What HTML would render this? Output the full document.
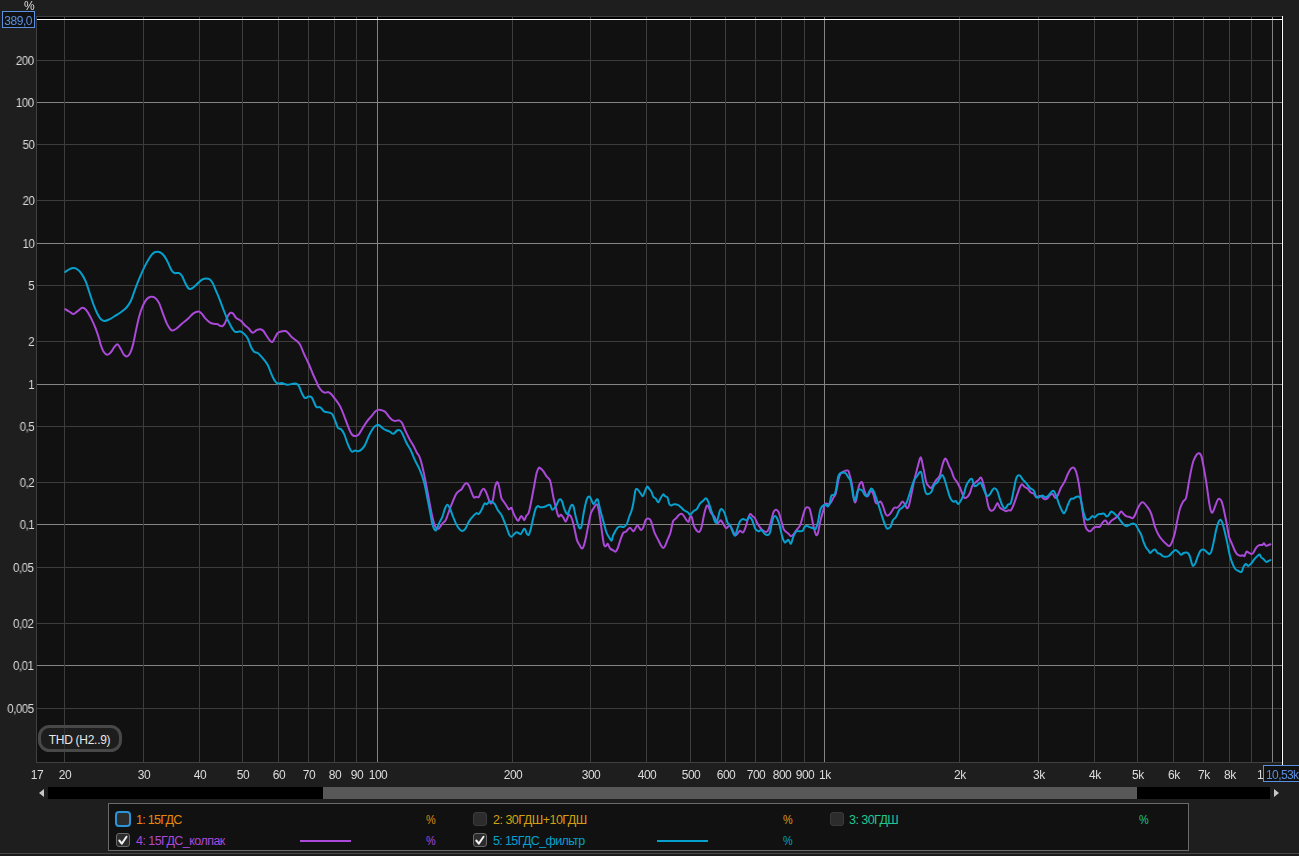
<!DOCTYPE html>
<html lang="ru"><head><meta charset="utf-8"><title>THD</title>
<style>
html,body{margin:0;padding:0;background:#1e1e1e;}
body{width:1299px;height:856px;position:relative;overflow:hidden;font-family:"Liberation Sans",sans-serif;font-size:12px;color:#dcdcdc;}
.plotsvg{position:absolute;left:0;top:0;}
.yl,.xl,.unit,.cur{will-change:transform;}
.yl{transform:scaleX(0.955);transform-origin:right center;position:absolute;right:1265px;height:14px;line-height:14px;white-space:nowrap;letter-spacing:-0.45px;}
.xl{position:absolute;top:768px;width:40px;margin-left:-20px;text-align:center;height:14px;line-height:14px;white-space:nowrap;letter-spacing:-0.45px;}
.unit{position:absolute;left:24px;top:-1px;height:14px;line-height:14px;letter-spacing:-0.3px;}
.cur{position:absolute;box-sizing:border-box;border:1px solid #5b90e0;background:#111;color:#5b90e0;white-space:nowrap;letter-spacing:-0.45px;overflow:hidden;}
.thd{position:absolute;left:38px;top:725px;width:84px;height:27px;box-sizing:border-box;border:3px solid #484848;border-radius:11.5px;background:rgba(40,40,40,0.55);text-align:center;padding-top:1px;line-height:22px;letter-spacing:-0.28px;color:#e8e8e8;text-indent:-1px;}
.sb{position:absolute;left:48px;top:787px;width:1222px;height:12px;background:#000;}
.sb i{position:absolute;left:275px;top:0;width:814px;height:12px;background:#585858;}
.arr{position:absolute;width:0;height:0;border-top:4px solid transparent;border-bottom:4px solid transparent;}
.legend{position:absolute;left:108px;top:803px;width:1081px;height:48px;box-sizing:border-box;border:1px solid #6a6a6a;background:#111;}
.cb{position:absolute;box-sizing:border-box;width:14px;height:14px;border:1px solid #3a3a3a;border-radius:3px;background:#2c2c2c;}
.cb.on{border-color:#6a6a6a;}
.cb.focus{width:16px;height:16px;border:2px solid #2a94d6;border-radius:4px;}
.lt{position:absolute;height:16px;line-height:16px;white-space:nowrap;font-size:12.5px;letter-spacing:-0.55px;}
.pc{transform:scaleX(0.87);transform-origin:0 0;}
.ln{position:absolute;height:2px;width:51px;}
.foot{position:absolute;left:0;top:853px;width:1299px;height:3px;background:#1b1b1b;border-top:1px solid #484848;box-sizing:border-box;}
</style></head><body>

<svg class="plotsvg" width="1299" height="856" viewBox="0 0 1299 856">
<rect x="36" y="16" width="1247" height="747" fill="#111111"/>
<rect x="37" y="17" width="1245" height="2" fill="#000"/>
<rect x="1281" y="20" width="1" height="742" fill="#000"/>
<rect x="37" y="60" width="1245" height="1" fill="#3d3d3d"/>
<rect x="37" y="102" width="1245" height="1" fill="#848484"/>
<rect x="37" y="144" width="1245" height="1" fill="#3d3d3d"/>
<rect x="37" y="200" width="1245" height="1" fill="#3d3d3d"/>
<rect x="37" y="243" width="1245" height="1" fill="#848484"/>
<rect x="37" y="285" width="1245" height="1" fill="#3d3d3d"/>
<rect x="37" y="341" width="1245" height="1" fill="#3d3d3d"/>
<rect x="37" y="384" width="1245" height="1" fill="#848484"/>
<rect x="37" y="426" width="1245" height="1" fill="#3d3d3d"/>
<rect x="37" y="482" width="1245" height="1" fill="#3d3d3d"/>
<rect x="37" y="524" width="1245" height="1" fill="#848484"/>
<rect x="37" y="567" width="1245" height="1" fill="#3d3d3d"/>
<rect x="37" y="623" width="1245" height="1" fill="#3d3d3d"/>
<rect x="37" y="665" width="1245" height="1" fill="#848484"/>
<rect x="37" y="708" width="1245" height="1" fill="#3d3d3d"/>
<rect x="64" y="17" width="1" height="745" fill="#3d3d3d"/>
<rect x="143" y="17" width="1" height="745" fill="#3d3d3d"/>
<rect x="199" y="17" width="1" height="745" fill="#3d3d3d"/>
<rect x="242" y="17" width="1" height="745" fill="#3d3d3d"/>
<rect x="278" y="17" width="1" height="745" fill="#3d3d3d"/>
<rect x="308" y="17" width="1" height="745" fill="#3d3d3d"/>
<rect x="334" y="17" width="1" height="745" fill="#3d3d3d"/>
<rect x="356" y="17" width="1" height="745" fill="#3d3d3d"/>
<rect x="377" y="17" width="1" height="745" fill="#848484"/>
<rect x="512" y="17" width="1" height="745" fill="#3d3d3d"/>
<rect x="590" y="17" width="1" height="745" fill="#3d3d3d"/>
<rect x="646" y="17" width="1" height="745" fill="#3d3d3d"/>
<rect x="690" y="17" width="1" height="745" fill="#3d3d3d"/>
<rect x="725" y="17" width="1" height="745" fill="#3d3d3d"/>
<rect x="755" y="17" width="1" height="745" fill="#3d3d3d"/>
<rect x="781" y="17" width="1" height="745" fill="#3d3d3d"/>
<rect x="804" y="17" width="1" height="745" fill="#3d3d3d"/>
<rect x="824" y="17" width="1" height="745" fill="#848484"/>
<rect x="959" y="17" width="1" height="745" fill="#3d3d3d"/>
<rect x="1038" y="17" width="1" height="745" fill="#3d3d3d"/>
<rect x="1094" y="17" width="1" height="745" fill="#3d3d3d"/>
<rect x="1137" y="17" width="1" height="745" fill="#3d3d3d"/>
<rect x="1173" y="17" width="1" height="745" fill="#3d3d3d"/>
<rect x="1203" y="17" width="1" height="745" fill="#3d3d3d"/>
<rect x="1229" y="17" width="1" height="745" fill="#3d3d3d"/>
<rect x="1251" y="17" width="1" height="745" fill="#3d3d3d"/>
<rect x="1272" y="17" width="1" height="745" fill="#848484"/>
<rect x="36" y="16" width="1" height="747" fill="#404040"/>
<rect x="36" y="16" width="1246" height="1" fill="#404040"/>
<rect x="36" y="762" width="1246" height="1" fill="#404040"/>
<g fill="none" stroke-width="2" stroke-linejoin="round" stroke-linecap="round">
<path stroke="#ab49d8" d="M65.2 309.2C66.0 309.7 68.5 311.2 69.9 312.0C71.3 312.8 72.3 314.0 73.5 313.9C74.7 313.8 75.8 312.4 77.2 311.4C78.7 310.4 80.8 308.0 82.2 307.7C83.7 307.4 84.5 308.0 85.9 309.6C87.3 311.2 89.2 314.4 90.8 317.6C92.4 320.8 94.3 325.0 95.7 328.7C97.1 332.4 98.6 337.2 99.4 339.8C100.2 342.4 99.8 342.2 100.5 344.2C101.2 346.2 102.4 349.9 103.5 351.6C104.6 353.4 106.0 354.6 107.2 354.7C108.4 354.8 109.7 353.5 110.9 352.2C112.1 350.9 113.5 348.0 114.6 346.7C115.7 345.4 116.7 344.0 117.7 344.4C118.7 344.8 119.8 347.4 120.8 349.1C121.8 350.8 122.9 353.5 123.9 354.7C124.9 355.9 125.9 356.7 126.9 356.5C127.9 356.3 129.0 355.4 130.0 353.4C131.0 351.3 132.1 348.2 133.1 344.2C134.1 340.2 135.2 334.1 136.2 329.4C137.2 324.7 138.2 319.9 139.3 315.9C140.4 311.9 141.8 308.2 143.0 305.4C144.2 302.6 145.4 300.6 146.7 299.2C148.0 297.8 149.6 297.0 151.0 296.8C152.4 296.6 154.0 297.0 155.3 298.0C156.6 299.0 157.8 300.4 159.0 302.9C160.2 305.4 161.5 309.5 162.7 312.8C163.9 316.1 165.2 319.9 166.4 322.6C167.6 325.3 169.0 327.5 170.0 328.8C171.0 330.1 171.5 330.6 172.5 330.6C173.5 330.6 174.5 330.0 176.2 328.8C177.8 327.6 180.3 325.1 182.4 323.3C184.5 321.6 186.7 320.0 188.5 318.3C190.3 316.6 191.8 314.5 193.4 313.4C195.1 312.3 197.1 311.6 198.4 311.6C199.8 311.6 200.3 312.2 201.5 313.4C202.7 314.6 204.4 317.4 205.8 318.9C207.2 320.4 208.7 321.8 210.1 322.6C211.5 323.4 213.2 323.6 214.4 323.9C215.6 324.1 216.6 323.8 217.5 324.1C218.4 324.4 219.1 325.4 219.9 325.7C220.7 326.0 221.6 326.5 222.4 326.1C223.2 325.7 224.1 324.8 224.9 323.3C225.7 321.8 226.5 318.8 227.3 317.1C228.1 315.4 229.1 313.9 229.8 313.2C230.5 312.5 231.0 312.7 231.6 312.8C232.2 312.9 232.7 313.1 233.5 314.0C234.3 314.9 234.9 316.8 236.2 317.9C237.5 319.0 239.7 319.7 241.1 320.9C242.5 322.1 243.6 324.0 244.8 325.2C246.0 326.4 247.4 327.2 248.5 328.3C249.6 329.4 250.8 331.3 251.6 332.0C252.4 332.7 252.6 332.9 253.4 332.6C254.2 332.3 255.4 330.8 256.5 330.2C257.6 329.6 259.1 329.1 260.2 329.2C261.3 329.3 262.2 329.6 263.3 330.8C264.4 332.0 265.8 334.7 266.9 336.3C268.0 337.9 269.1 339.7 270.0 340.6C270.9 341.5 271.7 342.4 272.5 341.9C273.3 341.4 274.2 339.0 275.0 337.6C275.8 336.2 276.6 334.3 277.4 333.3C278.2 332.3 278.6 332.2 279.9 331.8C281.2 331.4 284.0 330.8 285.4 331.0C286.8 331.2 287.4 332.2 288.5 333.3C289.6 334.4 290.8 336.3 292.2 337.6C293.6 338.9 295.8 340.1 297.1 341.3C298.4 342.5 299.1 342.8 300.2 344.9C301.3 346.9 302.5 350.4 303.9 353.6C305.3 356.8 307.3 360.5 308.8 364.0C310.3 367.5 311.8 371.4 313.1 374.5C314.4 377.6 315.9 380.6 316.8 382.5C317.7 384.4 317.4 384.8 318.3 386.2C319.2 387.6 320.9 390.0 322.0 391.1C323.1 392.2 324.1 392.5 325.1 392.7C326.1 392.9 327.2 391.9 328.2 392.1C329.2 392.4 330.1 392.9 331.3 394.2C332.5 395.5 334.2 397.8 335.6 399.7C337.0 401.6 338.6 403.4 339.9 405.9C341.2 408.4 342.4 411.4 343.6 414.5C344.8 417.6 346.2 421.4 347.3 424.3C348.4 427.2 349.4 429.9 350.3 431.7C351.2 433.5 351.9 434.7 352.8 435.4C353.7 436.1 354.9 436.2 355.9 436.0C356.9 435.8 357.9 435.5 359.0 434.2C360.1 432.9 361.4 430.1 362.7 428.0C364.0 425.9 365.6 423.2 367.0 421.3C368.4 419.4 370.0 417.9 371.3 416.3C372.6 414.7 373.9 412.9 375.0 411.8C376.1 410.7 377.0 410.2 378.1 409.9C379.2 409.6 380.5 409.8 381.7 410.2C382.9 410.6 384.2 410.9 385.4 412.0C386.6 413.1 388.0 415.6 389.1 416.9C390.2 418.2 391.2 419.3 392.2 420.0C393.2 420.7 394.2 420.9 395.3 421.0C396.4 421.1 397.9 420.0 399.0 420.4C400.1 420.8 401.0 421.2 402.1 423.1C403.2 425.0 404.6 429.0 405.8 431.7C407.0 434.4 408.3 436.8 409.5 439.1C410.7 441.4 412.0 443.0 413.2 445.3C414.4 447.6 415.8 450.7 416.9 452.7C418.0 454.7 418.7 454.8 419.7 457.4C420.7 460.0 421.8 464.2 422.8 468.5C423.8 472.8 424.9 478.2 425.9 483.3C426.9 488.4 427.9 494.0 428.9 499.3C429.9 504.6 431.0 510.8 432.0 515.3C433.0 519.8 434.1 524.1 435.1 526.4C436.1 528.6 437.4 528.7 438.2 528.8C439.0 528.9 439.3 527.9 440.0 527.0C440.7 526.1 441.6 524.4 442.5 523.3C443.4 522.2 444.7 521.8 445.6 520.2C446.5 518.7 447.0 516.7 448.0 514.0C449.0 511.3 450.2 507.7 451.7 504.2C453.1 500.7 455.0 495.6 456.7 493.1C458.4 490.6 460.4 490.5 461.6 489.2C462.8 487.9 463.2 486.1 464.0 485.1C464.8 484.1 465.7 483.2 466.5 483.3C467.3 483.4 468.2 484.3 469.0 485.7C469.8 487.1 470.6 489.9 471.4 491.9C472.2 493.8 473.1 496.6 473.9 497.4C474.7 498.2 475.6 496.9 476.4 496.8C477.2 496.7 478.0 497.9 478.8 497.0C479.6 496.1 480.5 492.7 481.3 491.3C482.1 489.9 482.9 488.6 483.7 488.8C484.5 489.0 485.4 490.8 486.2 492.5C487.0 494.2 487.9 497.4 488.7 499.3C489.5 501.2 490.4 503.6 491.1 503.6C491.8 503.6 492.4 501.9 493.0 499.3C493.6 496.7 494.2 491.0 494.8 488.2C495.4 485.4 496.3 482.9 496.9 482.3C497.5 481.7 497.9 482.7 498.5 484.5C499.1 486.3 499.9 490.8 500.4 493.1C500.9 495.5 500.9 497.0 501.6 498.6C502.3 500.2 503.8 501.6 504.7 503.0C505.6 504.4 506.4 505.6 507.1 506.7C507.8 507.8 508.3 509.3 509.0 509.5C509.7 509.7 510.8 507.3 511.5 507.9C512.2 508.4 512.6 511.2 513.3 512.8C514.0 514.4 515.0 516.4 515.8 517.7C516.6 519.0 517.3 521.1 518.2 520.8C519.1 520.5 520.3 516.0 521.3 515.9C522.3 515.8 523.6 520.2 524.4 520.2C525.2 520.2 525.5 517.1 526.2 515.9C526.9 514.7 527.9 515.2 528.7 512.8C529.5 510.4 530.3 506.2 531.2 501.7C532.1 497.2 533.3 490.5 534.2 485.7C535.1 480.9 535.9 475.8 536.7 472.8C537.5 469.8 538.2 468.6 538.8 467.9C539.4 467.2 539.8 467.9 540.5 468.4C541.2 468.9 542.1 469.6 543.1 470.9C544.1 472.1 545.1 474.3 546.2 475.9C547.3 477.4 549.0 478.1 549.9 480.2C550.8 482.2 551.1 485.2 551.7 488.2C552.3 491.2 552.8 494.7 553.5 498.0C554.2 501.3 555.2 504.8 556.0 507.9C556.8 511.0 557.7 515.4 558.5 516.5C559.3 517.6 560.1 514.5 560.9 514.7C561.7 514.9 562.6 516.6 563.4 517.7C564.2 518.8 565.0 521.9 565.9 521.4C566.8 520.9 567.9 515.1 568.9 514.7C569.9 514.3 571.1 516.6 572.0 519.0C572.9 521.4 573.7 525.3 574.5 528.8C575.3 532.3 576.1 537.2 576.9 539.9C577.7 542.6 578.6 543.4 579.4 544.8C580.2 546.2 581.2 548.3 581.9 548.5C582.6 548.7 583.0 548.1 583.7 546.1C584.4 544.1 585.4 539.9 586.2 536.2C587.0 532.5 587.8 527.8 588.6 523.9C589.4 520.0 590.2 515.6 591.1 512.8C592.0 510.0 593.3 508.7 594.2 507.3C595.1 505.9 596.0 503.9 596.7 504.2C597.4 504.5 597.9 506.4 598.5 509.1C599.1 511.8 599.7 516.1 600.3 520.2C600.9 524.3 601.6 529.6 602.2 533.7C602.8 537.8 603.4 542.7 604.0 544.8C604.6 546.9 605.3 546.3 605.9 546.1C606.5 545.9 607.0 543.4 607.7 543.8C608.4 544.2 609.3 547.4 610.2 548.5C611.1 549.6 612.4 549.9 613.3 550.4C614.2 550.9 615.0 551.9 615.7 551.6C616.4 551.3 616.9 550.2 617.6 548.5C618.3 546.8 619.1 543.7 620.0 541.1C620.9 538.5 622.1 534.7 623.1 533.1C624.1 531.5 625.1 532.4 626.2 531.5C627.3 530.6 628.7 527.8 629.9 527.8C631.1 527.8 632.4 531.7 633.6 531.3C634.8 530.9 636.1 525.6 637.3 525.4C638.5 525.2 640.0 529.7 641.0 530.0C642.0 530.3 642.6 528.7 643.4 527.0C644.2 525.3 644.9 520.9 645.9 519.6C646.9 518.3 648.7 518.5 649.6 519.0C650.5 519.5 650.7 520.5 651.5 522.7C652.3 525.0 653.4 529.6 654.5 532.5C655.6 535.4 657.1 537.6 658.2 539.9C659.3 542.2 660.5 544.8 661.3 546.1C662.1 547.4 662.6 547.9 663.2 547.9C663.8 547.9 664.3 547.4 665.0 546.1C665.7 544.8 666.6 542.2 667.5 539.9C668.4 537.6 669.6 535.6 670.5 532.5C671.4 529.4 672.1 523.8 673.0 521.4C673.9 519.0 675.1 519.4 676.1 518.3C677.1 517.2 678.2 515.4 679.2 514.7C680.2 514.0 681.2 513.4 682.2 514.0C683.2 514.6 684.3 517.0 685.3 518.3C686.3 519.6 687.6 522.2 688.4 522.0C689.2 521.8 689.4 517.9 690.0 517.1C690.6 516.3 691.2 515.8 691.8 517.1C692.4 518.4 693.0 523.0 693.7 525.1C694.4 527.2 695.3 528.9 696.2 530.0C697.1 531.1 698.3 532.5 699.2 531.9C700.1 531.3 700.9 529.4 701.7 526.4C702.5 523.4 703.4 517.4 704.2 514.0C705.0 510.6 705.9 507.2 706.6 506.0C707.3 504.8 707.8 505.6 708.5 506.7C709.2 507.8 709.9 511.1 710.9 512.8C711.9 514.5 713.5 515.4 714.6 517.1C715.7 518.9 716.7 522.8 717.7 523.3C718.7 523.8 719.8 519.9 720.8 520.2C721.8 520.5 723.0 523.8 723.9 525.1C724.8 526.4 725.4 528.1 726.3 528.2C727.2 528.3 728.5 525.6 729.4 525.7C730.3 525.8 731.0 527.2 731.9 528.8C732.8 530.3 734.1 534.2 735.0 535.0C735.9 535.8 736.6 534.4 737.4 533.7C738.2 533.0 739.0 530.9 739.9 530.7C740.8 530.5 742.1 533.0 743.0 532.5C743.9 532.0 744.6 529.9 745.4 527.6C746.2 525.4 747.1 521.3 747.9 519.0C748.7 516.7 749.5 514.4 750.3 514.0C751.1 513.6 752.1 515.9 752.8 516.5C753.5 517.1 754.0 516.7 754.7 517.7C755.4 518.7 756.2 521.1 757.1 522.7C758.0 524.4 759.2 526.3 760.2 527.6C761.2 528.9 762.3 530.0 763.3 530.7C764.3 531.4 765.5 532.2 766.4 531.9C767.3 531.6 768.0 530.8 768.8 528.8C769.6 526.8 770.5 523.1 771.3 520.2C772.1 517.3 772.9 513.4 773.7 511.6C774.5 509.9 775.4 509.6 776.2 509.7C777.0 509.8 777.9 510.5 778.7 512.2C779.5 514.0 780.3 517.4 781.1 520.2C781.9 523.0 782.8 526.8 783.6 528.8C784.4 530.8 785.3 531.1 786.1 531.9C786.9 532.7 787.7 533.0 788.5 533.7C789.3 534.4 790.2 536.1 791.0 536.2C791.8 536.3 792.6 535.4 793.5 534.4C794.4 533.4 795.4 531.5 796.5 530.0C797.6 528.5 799.2 527.4 800.2 525.1C801.2 522.9 801.9 519.2 802.7 516.5C803.5 513.8 804.4 510.6 805.1 509.1C805.8 507.6 806.3 507.4 807.0 507.3C807.7 507.2 808.8 507.2 809.5 508.5C810.2 509.8 810.6 512.1 811.3 515.3C812.0 518.5 813.0 524.3 813.8 527.6C814.6 530.9 815.5 534.2 816.2 535.0C816.9 535.8 817.4 535.0 818.1 532.5C818.8 530.0 819.6 524.0 820.5 520.2C821.4 516.4 822.9 512.2 823.5 509.7C824.1 507.2 823.9 506.0 824.4 505.0C824.9 504.0 825.7 503.7 826.4 503.6C827.1 503.5 828.0 504.6 828.8 504.4C829.6 504.1 830.3 503.3 831.1 502.1C831.9 500.9 832.8 498.7 833.5 497.4C834.2 496.1 834.9 496.1 835.5 494.5C836.1 492.9 836.5 490.1 837.0 487.5C837.5 484.9 838.1 480.9 838.7 478.7C839.3 476.4 839.7 475.2 840.5 474.0C841.3 472.8 842.5 472.3 843.4 471.7C844.3 471.1 844.9 470.8 845.7 470.6C846.5 470.5 847.8 470.1 848.4 470.8C849.0 471.5 849.1 473.1 849.5 474.6C849.9 476.1 850.5 477.6 851.0 479.9C851.5 482.1 852.1 485.2 852.5 488.1C852.9 491.0 853.2 495.0 853.6 497.4C854.0 499.8 854.5 502.0 854.9 502.4C855.3 502.8 855.8 501.6 856.3 499.8C856.8 498.0 857.3 493.9 857.7 491.6C858.1 489.4 858.5 487.7 858.9 486.3C859.3 484.9 859.7 483.8 860.2 483.2C860.8 482.6 861.6 481.5 862.2 482.5C862.8 483.5 863.3 487.1 864.0 489.3C864.7 491.6 865.8 495.0 866.5 496.0C867.2 497.0 867.6 496.2 868.3 495.4C869.0 494.6 870.0 491.3 870.8 491.1C871.6 490.9 872.5 492.2 873.3 494.2C874.1 496.1 874.9 501.4 875.7 502.8C876.5 504.2 877.4 503.0 878.2 502.8C879.0 502.6 879.8 501.0 880.6 501.6C881.4 502.2 882.3 504.4 883.1 506.5C883.9 508.6 884.9 512.4 885.6 513.9C886.3 515.4 886.6 515.8 887.4 515.7C888.2 515.6 889.4 514.6 890.5 513.3C891.6 512.0 893.1 508.6 894.2 507.7C895.3 506.8 896.4 508.1 897.3 507.7C898.2 507.3 898.9 506.3 899.7 505.3C900.5 504.3 901.4 501.8 902.2 501.6C903.0 501.4 903.9 502.9 904.7 504.0C905.5 505.1 906.4 508.1 907.1 508.3C907.8 508.5 908.3 507.7 909.0 505.3C909.7 502.9 910.5 498.5 911.4 494.2C912.3 489.9 913.5 483.9 914.5 479.4C915.5 474.9 916.7 470.6 917.6 467.1C918.5 463.6 919.4 459.9 920.0 458.5C920.6 457.1 920.7 456.6 921.3 458.5C921.9 460.4 922.9 465.7 923.7 469.6C924.5 473.5 925.4 479.1 926.2 481.9C927.0 484.7 927.9 485.2 928.7 486.2C929.5 487.2 930.3 488.3 931.1 488.0C931.9 487.7 932.7 485.7 933.6 484.3C934.5 482.9 935.7 480.8 936.7 479.4C937.7 478.0 938.9 477.9 939.8 475.7C940.7 473.4 941.4 468.7 942.2 465.9C943.0 463.1 944.0 460.1 944.7 459.1C945.4 458.1 945.8 458.6 946.5 459.7C947.2 460.8 948.2 464.0 949.0 465.9C949.8 467.8 950.7 468.9 951.5 470.8C952.3 472.8 953.0 475.8 953.9 477.6C954.8 479.5 956.0 480.2 957.0 481.9C958.0 483.6 959.2 485.9 960.1 488.0C961.0 490.1 961.8 492.6 962.5 494.2C963.2 495.8 963.6 497.5 964.4 497.9C965.2 498.3 966.6 497.5 967.5 496.7C968.4 495.9 969.1 494.9 969.9 493.0C970.7 491.1 971.5 487.4 972.4 485.6C973.3 483.9 974.5 483.4 975.5 482.5C976.5 481.6 977.6 480.8 978.5 480.0C979.4 479.2 980.2 476.9 981.0 477.6C981.8 478.3 982.7 481.5 983.5 484.3C984.3 487.1 985.1 490.5 985.9 494.2C986.7 497.9 987.6 503.8 988.4 506.5C989.2 509.2 989.7 509.8 990.5 510.4C991.3 511.0 992.3 510.8 993.1 510.2C993.9 509.6 994.8 507.7 995.5 506.5C996.2 505.3 996.9 502.9 997.6 503.1C998.3 503.3 999.0 506.6 999.9 507.7C1000.8 508.8 1001.9 509.0 1002.9 509.6C1003.9 510.2 1005.1 511.1 1006.0 511.2C1006.9 511.3 1007.7 510.4 1008.5 510.2C1009.3 510.0 1010.1 511.0 1010.9 510.2C1011.7 509.4 1012.5 507.6 1013.4 505.3C1014.3 503.1 1015.5 499.6 1016.5 496.7C1017.5 493.8 1018.7 490.1 1019.6 488.0C1020.5 485.9 1021.2 484.5 1022.0 484.3C1022.8 484.1 1023.6 486.1 1024.5 486.8C1025.4 487.5 1026.6 487.7 1027.6 488.6C1028.6 489.5 1029.6 491.5 1030.6 492.3C1031.6 493.1 1032.8 492.8 1033.7 493.6C1034.6 494.4 1035.3 496.9 1036.2 497.3C1037.1 497.7 1038.4 496.1 1039.3 496.0C1040.2 495.9 1040.9 496.2 1041.7 496.7C1042.5 497.2 1043.3 498.8 1044.2 499.1C1045.1 499.4 1046.3 499.2 1047.3 498.5C1048.3 497.8 1049.4 495.5 1050.3 494.8C1051.2 494.1 1052.0 493.7 1052.8 494.2C1053.6 494.7 1054.5 497.7 1055.3 497.9C1056.1 498.1 1056.8 497.0 1057.7 495.4C1058.6 493.8 1059.7 490.2 1060.8 488.0C1061.9 485.8 1063.4 484.1 1064.5 481.9C1065.6 479.6 1066.6 476.7 1067.6 474.5C1068.6 472.3 1069.7 470.0 1070.7 468.9C1071.7 467.8 1072.8 467.2 1073.7 467.7C1074.6 468.2 1075.4 469.4 1076.2 472.0C1077.0 474.6 1078.0 479.2 1078.7 483.1C1079.4 487.0 1079.9 490.9 1080.5 495.4C1081.1 499.9 1081.8 505.9 1082.4 510.2C1083.0 514.5 1083.6 518.3 1084.2 521.3C1084.8 524.3 1085.4 526.5 1086.1 528.1C1086.8 529.7 1087.7 530.4 1088.5 530.9C1089.3 531.4 1090.2 531.4 1091.0 530.9C1091.8 530.4 1092.5 528.8 1093.4 528.1C1094.3 527.4 1095.5 527.0 1096.5 526.8C1097.5 526.6 1098.7 527.4 1099.6 526.8C1100.5 526.2 1101.3 524.1 1102.1 523.1C1102.9 522.1 1103.8 521.0 1104.5 520.7C1105.2 520.4 1105.8 520.7 1106.4 521.3C1107.0 521.9 1107.4 524.5 1108.2 524.4C1109.0 524.3 1110.3 521.6 1111.3 520.7C1112.3 519.8 1113.3 519.6 1114.4 518.8C1115.5 518.0 1117.0 516.9 1118.1 515.7C1119.2 514.5 1120.3 511.7 1121.2 511.4C1122.1 511.1 1122.7 513.1 1123.6 513.9C1124.5 514.7 1125.7 515.9 1126.7 516.4C1127.7 516.9 1128.8 516.7 1129.8 517.0C1130.8 517.3 1131.7 518.6 1132.5 518.3C1133.3 518.0 1134.0 517.0 1134.9 515.2C1135.8 513.5 1137.0 509.9 1138.0 507.8C1139.0 505.8 1140.2 503.8 1141.1 502.9C1142.0 502.0 1142.6 502.0 1143.5 502.5C1144.4 503.0 1145.5 504.5 1146.6 506.0C1147.7 507.5 1149.3 509.4 1150.3 511.5C1151.3 513.6 1152.0 516.2 1152.8 518.9C1153.6 521.6 1154.2 524.7 1155.2 527.5C1156.2 530.3 1157.7 533.4 1158.9 535.5C1160.1 537.6 1161.4 539.0 1162.6 540.4C1163.8 541.8 1165.2 543.2 1166.3 544.1C1167.4 545.0 1168.5 546.3 1169.4 546.0C1170.3 545.7 1171.0 544.6 1171.9 542.3C1172.8 540.0 1174.1 536.1 1175.0 532.4C1175.9 528.7 1176.6 524.0 1177.4 520.1C1178.2 516.2 1179.0 512.1 1179.9 509.0C1180.8 505.9 1182.0 503.5 1183.0 501.7C1184.0 499.9 1185.1 500.9 1186.0 498.0C1186.9 495.1 1187.7 488.9 1188.5 484.4C1189.3 479.9 1190.2 474.8 1191.0 470.9C1191.8 467.0 1192.5 463.7 1193.4 461.0C1194.3 458.3 1195.6 456.2 1196.5 454.9C1197.4 453.6 1198.2 453.1 1199.0 453.3C1199.8 453.5 1200.6 453.6 1201.4 456.1C1202.2 458.6 1203.1 463.9 1203.9 468.4C1204.7 472.9 1205.6 477.9 1206.4 483.2C1207.2 488.5 1208.1 495.9 1208.8 500.4C1209.5 504.9 1210.1 508.3 1210.7 510.3C1211.3 512.3 1211.8 513.1 1212.5 512.5C1213.2 511.9 1214.2 508.6 1215.0 506.6C1215.8 504.6 1216.7 501.7 1217.4 500.4C1218.1 499.1 1218.6 498.6 1219.3 498.8C1220.0 499.0 1220.9 499.6 1221.7 501.7C1222.5 503.8 1223.4 507.8 1224.2 511.5C1225.0 515.2 1225.9 519.6 1226.7 523.8C1227.5 528.0 1228.2 533.5 1229.1 536.9C1230.0 540.3 1231.3 542.0 1232.2 544.3C1233.1 546.6 1233.9 548.9 1234.7 550.5C1235.5 552.1 1236.2 553.3 1237.1 554.2C1238.0 555.1 1239.3 555.5 1240.2 555.7C1241.1 555.9 1242.0 555.2 1242.7 555.2C1243.4 555.2 1243.9 556.6 1244.5 556.0C1245.1 555.4 1245.8 552.3 1246.4 551.7C1247.0 551.1 1247.4 551.9 1248.2 552.3C1249.0 552.7 1250.5 553.8 1251.3 553.9C1252.1 554.0 1252.5 553.9 1253.2 553.0C1253.9 552.1 1254.8 549.8 1255.6 548.6C1256.4 547.4 1257.3 546.4 1258.1 545.8C1258.9 545.2 1259.8 545.1 1260.5 545.0C1261.2 544.9 1261.8 545.3 1262.4 545.0C1263.0 544.7 1263.4 543.2 1264.0 543.3C1264.6 543.4 1265.3 545.5 1266.1 545.8C1266.8 546.1 1267.8 545.2 1268.5 545.0C1269.2 544.8 1270.1 544.4 1270.4 544.3"/>
<path stroke="#05a0cd" d="M65.2 272.0C65.9 271.6 67.9 269.9 69.2 269.3C70.5 268.7 72.0 268.1 73.3 268.1C74.6 268.1 75.8 268.3 77.2 269.3C78.6 270.3 80.1 271.8 81.6 273.9C83.0 276.0 84.6 278.7 85.9 281.9C87.2 285.1 88.4 289.3 89.6 293.0C90.8 296.7 92.1 300.7 93.3 304.0C94.5 307.3 95.7 310.2 96.9 312.7C98.1 315.2 99.4 317.4 100.6 318.8C101.8 320.2 102.8 320.9 104.3 321.0C105.8 321.1 107.4 320.3 109.3 319.4C111.2 318.5 113.4 317.0 115.4 315.7C117.5 314.4 119.8 313.1 121.6 311.7C123.4 310.3 125.0 309.3 126.5 307.5C128.0 305.7 129.4 304.0 130.8 301.0C132.2 298.0 133.6 293.3 135.1 289.3C136.6 285.3 138.3 280.8 140.0 276.9C141.7 273.0 143.3 269.2 145.0 265.9C146.7 262.6 148.5 259.4 149.9 257.2C151.3 255.0 152.4 253.8 153.6 252.9C154.8 252.0 156.1 251.7 157.3 251.7C158.5 251.7 159.8 252.1 161.0 252.9C162.2 253.7 163.5 254.9 164.7 256.6C165.9 258.4 167.3 261.1 168.4 263.4C169.5 265.7 170.5 268.6 171.5 270.2C172.5 271.8 173.3 272.5 174.5 273.0C175.7 273.5 177.6 272.6 178.8 273.0C180.0 273.4 180.9 274.1 181.9 275.7C182.9 277.3 184.0 280.4 185.0 282.5C186.0 284.6 187.2 286.9 188.1 288.0C189.0 289.1 189.5 289.2 190.5 289.0C191.5 288.8 192.8 288.0 194.2 286.8C195.6 285.6 197.8 283.2 199.2 281.9C200.6 280.6 201.8 279.8 202.9 279.2C204.0 278.6 204.8 278.4 205.9 278.4C207.0 278.4 208.5 278.4 209.6 279.2C210.7 280.0 211.6 281.0 212.7 283.1C213.8 285.2 215.3 289.1 216.4 291.7C217.5 294.3 218.2 295.8 219.3 298.6C220.4 301.4 221.8 305.3 223.0 308.5C224.2 311.7 225.5 314.9 226.7 317.7C227.9 320.5 229.4 323.2 230.4 325.1C231.4 327.0 231.7 327.8 232.5 328.9C233.3 330.0 234.2 331.6 235.5 332.0C236.8 332.4 239.1 331.1 240.5 331.4C241.9 331.7 243.0 332.7 244.2 333.9C245.4 335.1 246.8 336.6 247.9 338.8C249.0 341.0 249.9 344.7 250.9 346.8C251.9 348.9 252.9 350.7 254.0 351.7C255.1 352.7 256.5 352.2 257.7 353.0C258.9 353.8 259.8 354.8 261.4 356.7C263.0 358.6 266.0 361.8 267.6 364.7C269.2 367.6 270.2 371.3 271.3 373.9C272.4 376.4 273.3 378.4 274.3 380.0C275.3 381.6 276.2 383.0 277.4 383.5C278.6 384.0 280.0 382.9 281.7 383.1C283.4 383.3 285.4 384.6 287.3 384.7C289.2 384.8 291.3 383.9 292.8 383.7C294.3 383.5 295.5 383.3 296.5 383.7C297.5 384.1 298.1 384.7 299.0 386.2C299.9 387.7 300.7 390.9 301.7 392.9C302.7 394.8 303.7 397.3 304.8 397.9C305.9 398.5 307.4 396.7 308.5 396.6C309.6 396.5 310.7 396.3 311.6 397.2C312.5 398.1 313.2 400.5 314.0 402.2C314.8 403.9 315.5 406.2 316.5 407.1C317.5 408.0 318.9 406.5 320.2 407.3C321.5 408.1 323.0 410.8 324.5 411.7C326.0 412.6 328.1 412.1 329.4 412.6C330.7 413.1 331.5 412.9 332.5 414.5C333.5 416.1 334.7 419.6 335.6 421.9C336.5 424.1 337.1 426.8 338.0 428.0C338.9 429.2 340.1 428.3 341.1 429.3C342.1 430.3 343.2 431.9 344.2 434.2C345.2 436.4 346.3 440.2 347.3 442.8C348.3 445.4 349.5 448.1 350.3 449.6C351.1 451.1 351.4 451.6 352.2 451.7C353.0 451.8 354.3 450.5 355.3 450.4C356.3 450.3 357.2 451.4 358.3 451.2C359.4 451.0 360.9 450.1 362.0 449.0C363.1 447.9 364.0 446.9 365.1 444.7C366.2 442.5 367.6 438.6 368.8 436.0C370.0 433.4 371.4 431.0 372.5 429.3C373.6 427.6 374.6 426.5 375.6 425.8C376.6 425.1 377.7 424.7 378.7 425.0C379.7 425.3 380.6 426.6 381.7 427.4C382.8 428.2 384.0 429.2 385.4 429.9C386.8 430.6 388.5 431.0 389.8 431.7C391.1 432.4 392.2 434.0 393.4 433.8C394.6 433.6 396.0 431.1 397.1 430.5C398.2 429.9 399.3 429.9 400.2 430.5C401.1 431.1 401.7 432.1 402.7 434.2C403.7 436.2 405.1 440.1 406.4 442.8C407.7 445.5 409.3 447.4 410.7 450.2C412.1 453.0 413.3 456.6 414.8 459.9C416.3 463.1 418.2 466.0 419.7 469.7C421.2 473.4 422.8 477.5 424.0 482.0C425.2 486.5 426.1 491.7 427.1 496.8C428.1 501.9 429.3 508.1 430.2 512.8C431.1 517.5 431.8 522.2 432.6 525.1C433.4 528.0 434.4 529.7 435.1 530.3C435.8 530.9 436.2 530.1 436.9 528.8C437.6 527.5 438.5 524.8 439.4 522.7C440.3 520.7 441.6 518.9 442.5 516.5C443.4 514.1 444.2 510.4 445.0 508.5C445.8 506.6 446.6 504.8 447.4 504.8C448.2 504.8 449.0 506.6 449.9 508.5C450.8 510.4 451.9 513.7 453.0 516.5C454.1 519.3 455.6 523.0 456.7 525.1C457.8 527.2 458.8 528.4 459.7 529.4C460.6 530.4 461.3 531.1 462.2 531.0C463.1 530.9 464.4 530.0 465.3 528.8C466.2 527.6 466.9 525.4 467.7 523.9C468.5 522.4 469.2 521.0 470.2 519.6C471.2 518.2 472.9 516.4 473.9 515.3C474.9 514.2 475.6 513.3 476.4 513.1C477.2 512.9 478.0 514.5 478.8 514.0C479.6 513.5 480.4 512.0 481.3 510.3C482.2 508.6 483.5 504.6 484.4 503.6C485.3 502.6 486.0 504.5 486.8 504.2C487.6 503.9 488.5 502.1 489.3 501.7C490.1 501.3 490.8 501.3 491.7 501.7C492.6 502.1 493.8 502.8 494.8 504.2C495.8 505.6 496.8 508.5 497.9 510.3C499.0 512.1 500.5 513.2 501.6 515.3C502.7 517.4 503.8 520.5 504.7 522.7C505.6 525.0 506.4 526.8 507.1 528.8C507.8 530.8 508.3 533.1 509.0 534.4C509.7 535.7 510.6 536.9 511.5 536.8C512.4 536.7 513.6 534.5 514.5 533.7C515.4 533.0 516.0 532.2 517.0 532.3C518.0 532.4 519.7 534.5 520.7 534.1C521.7 533.7 522.5 530.8 523.2 530.0C523.9 529.2 524.4 528.5 525.0 529.1C525.6 529.7 526.2 532.8 526.8 533.7C527.4 534.6 528.1 535.3 528.7 534.7C529.3 534.1 529.8 532.6 530.5 530.0C531.2 527.4 532.2 522.5 533.0 519.0C533.8 515.5 534.7 511.3 535.5 509.1C536.3 506.9 537.1 506.3 537.9 506.0C538.6 505.7 538.8 507.2 540.0 507.3C541.2 507.4 543.2 507.1 544.9 506.7C546.5 506.3 548.7 504.3 549.9 504.8C551.1 505.3 551.3 509.5 552.3 509.7C553.3 509.9 555.0 507.5 556.0 506.0C557.0 504.5 557.8 501.6 558.5 500.5C559.2 499.4 559.7 499.1 560.3 499.3C560.9 499.5 561.5 500.0 562.2 501.7C562.9 503.4 563.7 507.6 564.6 509.7C565.5 511.8 566.7 514.6 567.7 514.0C568.7 513.4 569.9 507.3 570.8 506.0C571.7 504.7 572.5 504.2 573.3 506.0C574.1 507.8 574.8 513.0 575.7 516.5C576.6 520.0 577.9 525.2 578.8 527.0C579.7 528.8 580.5 529.4 581.3 527.0C582.1 524.6 582.8 517.4 583.7 512.8C584.6 508.2 585.9 502.0 586.8 499.3C587.7 496.6 588.6 496.6 589.3 496.6C590.0 496.6 590.4 498.0 591.1 499.3C591.8 500.6 592.8 504.0 593.6 504.2C594.4 504.4 595.3 501.2 596.0 500.5C596.7 499.8 597.2 498.3 597.9 499.9C598.6 501.5 599.4 506.7 600.3 510.3C601.2 513.9 602.4 517.7 603.4 521.4C604.4 525.1 605.5 529.7 606.5 532.5C607.5 535.3 608.7 536.8 609.6 538.1C610.5 539.4 611.1 541.0 611.7 540.5C612.3 540.0 612.3 537.1 613.3 535.0C614.3 532.9 616.4 529.0 617.6 527.6C618.8 526.2 619.7 526.5 620.7 526.4C621.7 526.3 622.7 527.4 623.7 527.0C624.7 526.6 625.9 525.6 626.8 523.9C627.7 522.1 628.5 518.8 629.3 516.5C630.1 514.2 631.0 512.8 631.7 510.3C632.4 507.8 633.0 505.0 633.6 501.7C634.2 498.4 634.8 492.7 635.4 490.6C636.0 488.5 636.5 488.8 637.3 489.2C638.1 489.6 639.5 491.9 640.4 493.1C641.3 494.3 642.1 496.4 642.8 496.2C643.5 496.0 644.0 493.5 644.7 491.9C645.4 490.3 646.3 487.0 647.1 486.6C647.9 486.2 648.9 488.5 649.6 489.4C650.3 490.3 650.9 490.7 651.5 491.9C652.1 493.1 652.6 495.7 653.3 496.8C654.0 497.9 655.0 497.7 655.8 498.6C656.6 499.5 657.4 502.4 658.2 502.3C659.0 502.2 659.9 499.3 660.7 498.0C661.5 496.7 662.5 494.6 663.2 494.3C663.9 494.0 664.3 495.7 665.0 496.2C665.7 496.7 666.8 496.1 667.5 497.4C668.2 498.7 668.7 502.9 669.3 504.2C669.9 505.5 670.4 505.4 671.2 505.4C672.0 505.4 673.1 504.3 674.2 504.2C675.3 504.1 676.8 504.3 677.9 504.8C679.0 505.3 680.0 506.4 681.0 507.3C682.0 508.2 683.0 509.5 684.1 510.3C685.2 511.1 686.8 511.5 687.8 512.2C688.8 512.9 689.0 514.9 690.0 514.7C691.0 514.5 692.6 511.9 693.7 511.0C694.8 510.1 695.8 510.3 696.8 509.1C697.8 507.9 698.9 504.9 699.9 503.6C700.9 502.3 701.9 502.0 702.9 501.1C703.9 500.2 705.1 498.1 706.0 498.3C706.9 498.5 707.6 500.1 708.5 502.3C709.4 504.5 710.5 508.3 711.6 511.6C712.7 514.9 714.3 520.4 715.2 522.0C716.1 523.6 716.4 523.1 717.1 521.4C717.8 519.7 718.9 513.7 719.6 511.6C720.3 509.5 720.6 508.7 721.4 508.9C722.2 509.1 723.5 510.5 724.5 512.8C725.5 515.1 726.7 520.7 727.6 522.7C728.5 524.8 729.2 523.7 730.0 525.1C730.8 526.5 731.7 529.5 732.5 531.3C733.3 533.0 734.2 536.0 735.0 535.6C735.8 535.2 736.6 531.2 737.4 528.8C738.2 526.4 739.0 523.0 739.9 521.4C740.8 519.8 741.9 519.2 743.0 519.0C744.1 518.8 745.7 520.5 746.7 520.2C747.7 519.9 748.2 517.1 749.1 517.1C750.0 517.1 751.2 518.2 752.2 520.2C753.2 522.2 754.3 526.9 755.3 528.8C756.3 530.6 757.3 531.1 758.3 531.3C759.3 531.5 760.4 529.6 761.4 530.0C762.4 530.4 763.5 532.9 764.5 533.7C765.5 534.5 766.7 535.2 767.6 535.0C768.5 534.8 769.2 535.0 770.0 532.5C770.8 530.0 771.7 523.0 772.5 520.2C773.3 517.4 774.2 516.1 775.0 515.9C775.8 515.7 776.6 517.2 777.4 519.0C778.2 520.8 779.1 523.3 779.9 526.4C780.7 529.5 781.6 534.7 782.4 537.4C783.2 540.1 784.1 541.8 784.8 542.4C785.5 543.0 786.1 541.5 786.7 541.1C787.3 540.7 787.8 539.5 788.5 539.9C789.2 540.3 790.2 544.2 791.0 543.6C791.8 543.0 792.6 538.2 793.5 536.2C794.4 534.2 795.5 532.1 796.5 531.3C797.5 530.5 798.6 531.4 799.6 531.3C800.6 531.2 801.9 531.4 802.7 530.7C803.5 530.0 803.8 527.8 804.5 527.0C805.2 526.2 806.1 526.1 807.0 526.1C807.9 526.1 809.1 526.9 810.1 527.3C811.1 527.6 812.3 528.0 813.2 528.2C814.1 528.5 814.8 529.9 815.6 528.8C816.4 527.7 817.3 524.7 818.1 521.4C818.9 518.1 819.6 511.8 820.5 509.1C821.4 506.4 822.6 506.0 823.5 505.3C824.4 504.6 825.1 504.8 825.8 505.0C826.5 505.2 827.3 506.7 827.9 506.5C828.5 506.3 829.0 505.4 829.6 503.6C830.2 501.8 830.7 497.1 831.4 495.7C832.1 494.3 833.1 495.6 833.7 495.1C834.4 494.6 834.8 494.3 835.3 492.7C835.8 491.1 836.2 488.3 836.7 485.7C837.2 483.1 837.6 479.0 838.1 477.0C838.6 475.0 839.1 474.3 839.9 473.5C840.7 472.7 842.1 472.4 843.1 472.4C844.1 472.4 845.2 472.8 846.0 473.6C846.8 474.4 847.4 475.9 848.1 477.0C848.8 478.1 849.8 478.6 850.4 480.5C851.0 482.4 851.4 485.5 851.9 488.1C852.4 490.7 852.8 494.2 853.3 496.3C853.8 498.4 854.1 500.2 854.6 500.4C855.1 500.6 855.5 498.8 856.0 497.4C856.5 496.0 856.9 493.3 857.4 491.9C857.9 490.5 858.1 489.4 858.9 489.2C859.7 489.0 861.2 489.6 862.2 490.5C863.2 491.4 863.8 493.9 864.6 494.8C865.4 495.7 866.3 496.6 867.1 496.0C867.9 495.4 868.9 492.3 869.6 491.1C870.3 489.9 870.7 488.5 871.4 488.6C872.1 488.7 873.0 489.8 873.9 491.7C874.8 493.6 876.0 497.6 876.9 500.3C877.8 503.0 878.5 504.8 879.4 507.7C880.3 510.6 881.5 514.5 882.5 517.6C883.5 520.7 884.8 524.4 885.6 526.2C886.4 528.1 886.6 528.6 887.4 528.7C888.2 528.8 889.6 528.2 890.5 526.8C891.4 525.3 892.1 521.6 893.0 520.0C893.9 518.4 895.0 518.6 896.0 517.0C897.0 515.4 898.1 511.8 899.1 510.2C900.1 508.6 901.0 508.9 902.2 507.7C903.4 506.5 905.2 505.5 906.5 502.8C907.8 500.1 909.0 495.4 910.2 491.7C911.4 488.0 912.8 483.2 913.9 480.6C915.0 478.0 916.1 477.6 917.0 476.3C917.9 475.0 918.7 473.2 919.4 472.6C920.1 472.0 920.7 471.1 921.3 472.6C921.9 474.2 922.4 478.6 923.1 481.9C923.8 485.2 924.9 490.2 925.6 492.3C926.3 494.4 926.5 494.2 927.4 494.2C928.3 494.2 930.0 493.9 931.1 492.3C932.2 490.8 933.2 486.5 934.2 484.9C935.2 483.3 936.4 483.6 937.3 482.5C938.2 481.4 939.0 479.5 939.8 478.2C940.6 476.9 941.5 474.9 942.2 474.9C942.9 474.9 943.3 476.0 944.1 478.2C944.9 480.4 946.1 484.7 947.1 488.0C948.1 491.3 949.2 495.6 950.2 497.9C951.2 500.2 952.4 501.1 953.3 501.6C954.2 502.1 955.0 500.6 955.8 501.0C956.6 501.4 957.3 504.2 958.2 504.0C959.1 503.8 960.4 501.3 961.3 499.7C962.2 498.1 963.0 496.5 963.8 494.2C964.6 491.9 965.4 487.8 966.2 485.6C967.0 483.5 967.8 482.4 968.7 481.3C969.6 480.2 970.9 478.1 971.8 478.8C972.7 479.5 973.4 484.5 974.2 485.6C975.0 486.7 975.7 486.1 976.7 485.6C977.7 485.1 979.4 482.2 980.4 482.5C981.4 482.8 982.0 485.4 982.9 487.4C983.8 489.3 985.1 492.8 985.9 494.2C986.7 495.6 987.1 496.0 987.8 496.0C988.5 496.0 989.2 495.2 990.0 494.2C990.8 493.2 991.7 490.9 992.5 489.9C993.3 488.9 994.1 488.2 994.9 488.4C995.7 488.6 996.6 489.3 997.4 491.1C998.2 492.9 999.0 496.5 999.9 499.1C1000.8 501.7 1002.0 505.0 1002.9 506.5C1003.8 508.0 1004.6 508.6 1005.4 508.3C1006.2 508.0 1007.0 505.6 1007.9 504.7C1008.8 503.8 1010.0 505.0 1010.9 502.8C1011.8 500.6 1012.6 495.6 1013.4 491.7C1014.2 487.8 1015.2 482.1 1015.9 479.4C1016.6 476.7 1017.0 476.3 1017.7 475.7C1018.4 475.1 1019.4 475.1 1020.2 475.7C1021.0 476.3 1021.6 478.2 1022.6 479.4C1023.6 480.6 1025.1 481.7 1026.3 483.1C1027.5 484.5 1028.8 486.8 1030.0 488.0C1031.2 489.2 1032.7 489.1 1033.7 490.5C1034.7 491.9 1035.4 495.5 1036.2 496.7C1037.0 497.9 1037.6 497.8 1038.6 497.6C1039.6 497.4 1041.2 495.4 1042.3 495.4C1043.4 495.3 1044.4 497.3 1045.4 497.3C1046.4 497.3 1047.5 496.3 1048.5 495.4C1049.5 494.5 1050.7 492.4 1051.6 491.7C1052.5 491.0 1053.2 490.3 1054.0 491.1C1054.8 491.9 1055.7 494.6 1056.5 496.7C1057.3 498.8 1058.1 501.6 1059.0 504.0C1059.9 506.4 1061.2 509.2 1062.0 510.8C1062.8 512.4 1063.3 513.3 1063.9 513.3C1064.5 513.3 1065.0 512.4 1065.7 510.8C1066.4 509.2 1067.4 505.9 1068.2 504.0C1069.0 502.1 1069.8 500.0 1070.7 499.1C1071.6 498.2 1072.8 498.9 1073.7 498.5C1074.6 498.1 1075.2 497.1 1076.2 496.9C1077.2 496.7 1079.0 496.1 1079.9 497.3C1080.8 498.5 1081.1 501.4 1081.7 504.0C1082.3 506.6 1083.0 510.3 1083.6 512.7C1084.2 515.1 1084.8 517.0 1085.4 518.2C1086.0 519.4 1086.6 519.7 1087.3 519.8C1088.0 519.9 1089.0 519.4 1089.8 518.8C1090.6 518.2 1091.4 516.4 1092.2 516.1C1093.0 515.9 1093.8 517.6 1094.7 517.3C1095.6 517.0 1096.8 515.1 1097.8 514.5C1098.8 513.9 1099.8 514.0 1100.8 513.9C1101.8 513.8 1102.9 513.1 1103.9 513.6C1104.9 514.1 1106.1 516.6 1107.0 516.6C1107.9 516.6 1108.8 514.8 1109.5 513.9C1110.2 513.0 1110.5 511.4 1111.3 511.4C1112.1 511.3 1113.4 512.8 1114.4 513.6C1115.4 514.4 1116.5 515.2 1117.5 516.4C1118.5 517.6 1119.5 519.4 1120.5 520.7C1121.5 522.0 1122.6 523.5 1123.6 524.4C1124.6 525.3 1125.6 526.2 1126.7 526.2C1127.8 526.2 1128.9 525.1 1130.0 524.6C1131.1 524.1 1132.2 523.4 1133.1 523.4C1134.0 523.4 1134.7 523.7 1135.5 524.6C1136.3 525.5 1137.1 527.2 1138.0 528.9C1138.9 530.5 1140.2 532.3 1141.1 534.5C1142.0 536.7 1142.7 539.8 1143.5 541.9C1144.3 544.0 1145.2 546.0 1146.0 547.4C1146.8 548.8 1147.8 549.6 1148.5 550.5C1149.2 551.4 1149.6 553.0 1150.3 553.0C1151.0 553.0 1152.0 551.1 1152.8 550.5C1153.6 549.9 1154.4 549.2 1155.2 549.6C1156.0 550.0 1156.9 552.3 1157.7 553.0C1158.5 553.7 1159.4 553.4 1160.2 553.9C1161.0 554.4 1161.8 555.5 1162.6 556.0C1163.4 556.5 1164.1 556.7 1165.1 556.7C1166.1 556.7 1167.6 556.7 1168.8 556.0C1170.0 555.3 1171.4 553.3 1172.5 552.3C1173.6 551.3 1174.6 549.9 1175.6 549.9C1176.6 549.9 1177.7 551.5 1178.6 552.3C1179.5 553.1 1180.3 554.7 1181.1 554.8C1181.9 554.9 1182.6 553.4 1183.6 553.0C1184.6 552.6 1186.3 552.2 1187.3 552.7C1188.3 553.2 1189.0 554.3 1189.7 556.0C1190.4 557.7 1191.0 561.1 1191.6 562.8C1192.2 564.4 1192.5 565.8 1193.1 565.9C1193.7 566.0 1194.5 564.9 1195.3 563.4C1196.1 561.9 1196.9 558.8 1197.7 556.7C1198.5 554.7 1199.3 552.3 1200.2 551.1C1201.1 549.9 1202.3 549.5 1203.3 549.6C1204.3 549.7 1205.4 550.9 1206.4 551.7C1207.4 552.5 1208.6 554.2 1209.4 554.2C1210.2 554.2 1210.6 553.8 1211.3 551.7C1212.0 549.7 1212.9 545.6 1213.7 541.9C1214.5 538.2 1215.4 533.0 1216.2 529.6C1217.0 526.2 1218.0 523.2 1218.7 521.6C1219.4 520.0 1219.9 519.5 1220.5 519.7C1221.1 519.9 1221.7 520.8 1222.4 522.8C1223.1 524.8 1224.0 528.6 1224.8 532.0C1225.6 535.4 1226.5 539.2 1227.3 543.1C1228.1 547.0 1229.0 552.1 1229.8 555.4C1230.6 558.7 1231.3 560.5 1232.2 562.8C1233.1 565.1 1234.3 567.7 1235.3 569.0C1236.3 570.3 1237.4 570.3 1238.4 570.8C1239.4 571.3 1240.7 572.6 1241.5 572.0C1242.3 571.4 1242.6 568.4 1243.3 567.1C1244.0 565.8 1245.0 564.2 1245.8 564.0C1246.6 563.8 1247.3 566.0 1248.2 565.9C1249.1 565.8 1250.3 564.5 1251.3 563.4C1252.3 562.3 1253.4 560.3 1254.4 559.1C1255.4 557.9 1256.6 556.8 1257.5 556.0C1258.4 555.2 1259.0 554.2 1259.6 554.4C1260.2 554.6 1260.5 556.5 1261.2 557.3C1261.9 558.1 1262.8 558.3 1263.6 559.1C1264.4 559.9 1265.3 561.6 1266.1 561.9C1266.9 562.2 1267.8 561.3 1268.5 561.0C1269.2 560.7 1270.1 560.2 1270.4 560.0"/>
</g>
<rect x="37" y="19" width="1246" height="1" fill="#fff"/>
<rect x="1282" y="16" width="1" height="749" fill="#fff"/>
</svg>
<div class="unit">%</div>
<div class="yl" style="top:54px">200</div>
<div class="yl" style="top:96px">100</div>
<div class="yl" style="top:138px">50</div>
<div class="yl" style="top:194px">20</div>
<div class="yl" style="top:237px">10</div>
<div class="yl" style="top:279px">5</div>
<div class="yl" style="top:335px">2</div>
<div class="yl" style="top:378px">1</div>
<div class="yl" style="top:420px">0,5</div>
<div class="yl" style="top:476px">0,2</div>
<div class="yl" style="top:518px">0,1</div>
<div class="yl" style="top:561px">0,05</div>
<div class="yl" style="top:617px">0,02</div>
<div class="yl" style="top:659px">0,01</div>
<div class="yl" style="top:702px">0,005</div>
<div class="xl" style="left:37px">17</div>
<div class="xl" style="left:65px">20</div>
<div class="xl" style="left:144px">30</div>
<div class="xl" style="left:200px">40</div>
<div class="xl" style="left:243px">50</div>
<div class="xl" style="left:279px">60</div>
<div class="xl" style="left:309px">70</div>
<div class="xl" style="left:335px">80</div>
<div class="xl" style="left:357px">90</div>
<div class="xl" style="left:378px">100</div>
<div class="xl" style="left:513px">200</div>
<div class="xl" style="left:591px">300</div>
<div class="xl" style="left:647px">400</div>
<div class="xl" style="left:691px">500</div>
<div class="xl" style="left:726px">600</div>
<div class="xl" style="left:756px">700</div>
<div class="xl" style="left:782px">800</div>
<div class="xl" style="left:805px">900</div>
<div class="xl" style="left:825px">1k</div>
<div class="xl" style="left:960px">2k</div>
<div class="xl" style="left:1039px">3k</div>
<div class="xl" style="left:1095px">4k</div>
<div class="xl" style="left:1138px">5k</div>
<div class="xl" style="left:1174px">6k</div>
<div class="xl" style="left:1204px">7k</div>
<div class="xl" style="left:1230px">8k</div>
<div class="xl" style="left:1266px">10k</div>
<div class="cur" style="left:2px;top:11px;width:33px;height:17px;line-height:16px;text-align:right;padding-right:2px;padding-top:1px;">389,0</div>
<div class="cur" style="left:1263px;top:765px;width:40px;height:17px;line-height:15px;padding-left:2px;padding-top:2px;letter-spacing:-0.6px;">10,53k</div>
<div class="thd">THD (H2..9)</div>
<div class="arr" style="left:39px;top:789px;border-right:5px solid #c8c8c8;"></div>
<div class="sb"><i></i></div>
<div class="arr" style="left:1274px;top:789px;border-left:5px solid #c8c8c8;"></div>
<div class="legend">
<div class="cb focus" style="left:6px;top:7px"></div><div class="lt" style="left:27px;top:8px;color:#e8890c;letter-spacing:-0.70px">1: 15ГДС</div><div class="lt pc" style="left:317px;top:8px;color:#e8890c">%</div>
<div class="cb " style="left:364px;top:8px"></div><div class="lt" style="left:384px;top:8px;color:#d4a013;letter-spacing:-0.50px">2: 30ГДШ+10ГДШ</div><div class="lt pc" style="left:674px;top:8px;color:#d4a013">%</div>
<div class="cb " style="left:721px;top:8px"></div><div class="lt" style="left:740px;top:8px;color:#1fc890;letter-spacing:-0.55px">3: 30ГДШ</div><div class="lt pc" style="left:1030px;top:8px;color:#1fc890">%</div>
<div class="cb on" style="left:7px;top:29px"><svg width="12" height="12" viewBox="0 0 12 12" style="position:absolute;left:0;top:0"><path d="M2.3 6.5 L4.8 9.6 L9.5 2.7" fill="none" stroke="#f2f2f2" stroke-width="2" stroke-linecap="round" stroke-linejoin="round"/></svg></div><div class="lt" style="left:27px;top:29px;color:#ab49d8;letter-spacing:-0.55px">4: 15ГДС_колпак</div><div class="ln" style="left:191px;top:36px;background:#ab49d8"></div><div class="lt pc" style="left:317px;top:29px;color:#ab49d8">%</div>
<div class="cb on" style="left:364px;top:29px"><svg width="12" height="12" viewBox="0 0 12 12" style="position:absolute;left:0;top:0"><path d="M2.3 6.5 L4.8 9.6 L9.5 2.7" fill="none" stroke="#f2f2f2" stroke-width="2" stroke-linecap="round" stroke-linejoin="round"/></svg></div><div class="lt" style="left:384px;top:29px;color:#05a0cd;letter-spacing:-0.63px">5: 15ГДС_фильтр</div><div class="ln" style="left:548px;top:36px;background:#05a0cd"></div><div class="lt pc" style="left:674px;top:29px;color:#05a0cd">%</div>
</div>
<div class="foot"></div>
</body></html>
